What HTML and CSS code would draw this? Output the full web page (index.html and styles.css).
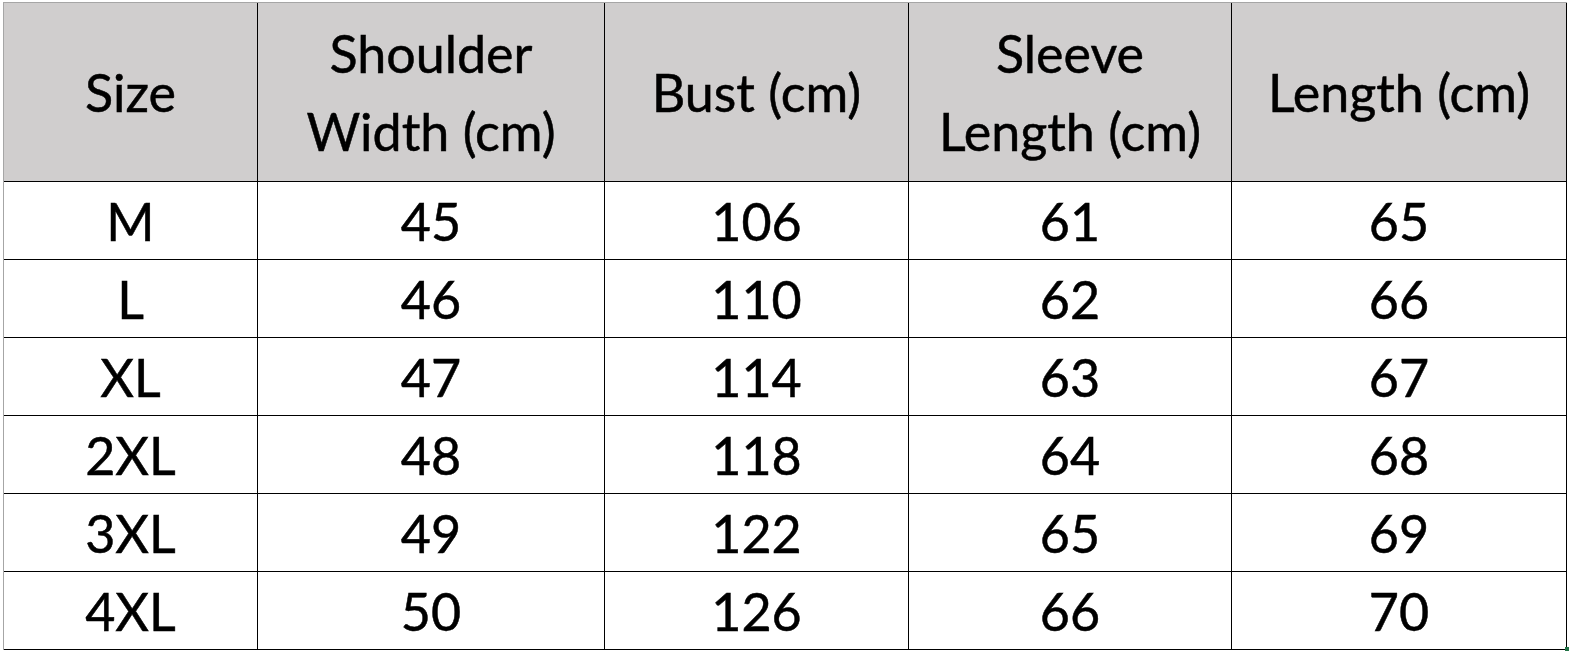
FILE: index.html
```html
<!DOCTYPE html>
<html>
<head>
<meta charset="utf-8">
<link rel="stylesheet" href="styles.css">
</head>
<body>
<div class="sheet">
  <div class="grid">
    <div class="cell head">Size</div>
    <div class="cell head">Shoulder<br>Width (cm)</div>
    <div class="cell head">Bust (cm)</div>
    <div class="cell head">Sleeve<br>Length (cm)</div>
    <div class="cell head">Length (cm)</div>

    <div class="cell">M</div><div class="cell">45</div><div class="cell">106</div><div class="cell">61</div><div class="cell">65</div>
    <div class="cell">L</div><div class="cell">46</div><div class="cell">110</div><div class="cell">62</div><div class="cell">66</div>
    <div class="cell">XL</div><div class="cell">47</div><div class="cell">114</div><div class="cell">63</div><div class="cell">67</div>
    <div class="cell">2XL</div><div class="cell">48</div><div class="cell">118</div><div class="cell">64</div><div class="cell">68</div>
    <div class="cell">3XL</div><div class="cell">49</div><div class="cell">122</div><div class="cell">65</div><div class="cell">69</div>
    <div class="cell">4XL</div><div class="cell">50</div><div class="cell">126</div><div class="cell">66</div><div class="cell">70</div>
  </div>
  <span class="handle"></span>
</div>
</body>
</html>
```

FILE: styles.css
```css
html, body {
  margin: 0;
  padding: 0;
  background: #ffffff;
}

.sheet {
  position: relative;
  width: 1570px;
  height: 651px;
  padding: 2px 0 0 3px;
  box-sizing: border-box;
}

.grid {
  display: grid;
  grid-template-columns: 254px 347px 304px 323px 335px;
  grid-template-rows: 179px repeat(6, 78px);
  border-left: 1px solid #a6a6a6;
  border-top: 1px solid #a6a6a6;
  width: max-content;
  font-family: Lato, "Noto Sans", sans-serif;
  font-size: 52px;
  color: #000;
  -webkit-text-stroke: 0.5px #000;
}

.cell {
  box-sizing: border-box;
  border-right: 1px solid #000;
  border-bottom: 1px solid #000;
  display: flex;
  align-items: center;
  justify-content: center;
  text-align: center;
  line-height: 78px;
  background: #fff;
}

.cell.head {
  background: #d0cece;
}

.handle {
  position: absolute;
  left: 1565px;
  top: 647px;
  width: 4px;
  height: 4px;
  background: #217346;
}
```
